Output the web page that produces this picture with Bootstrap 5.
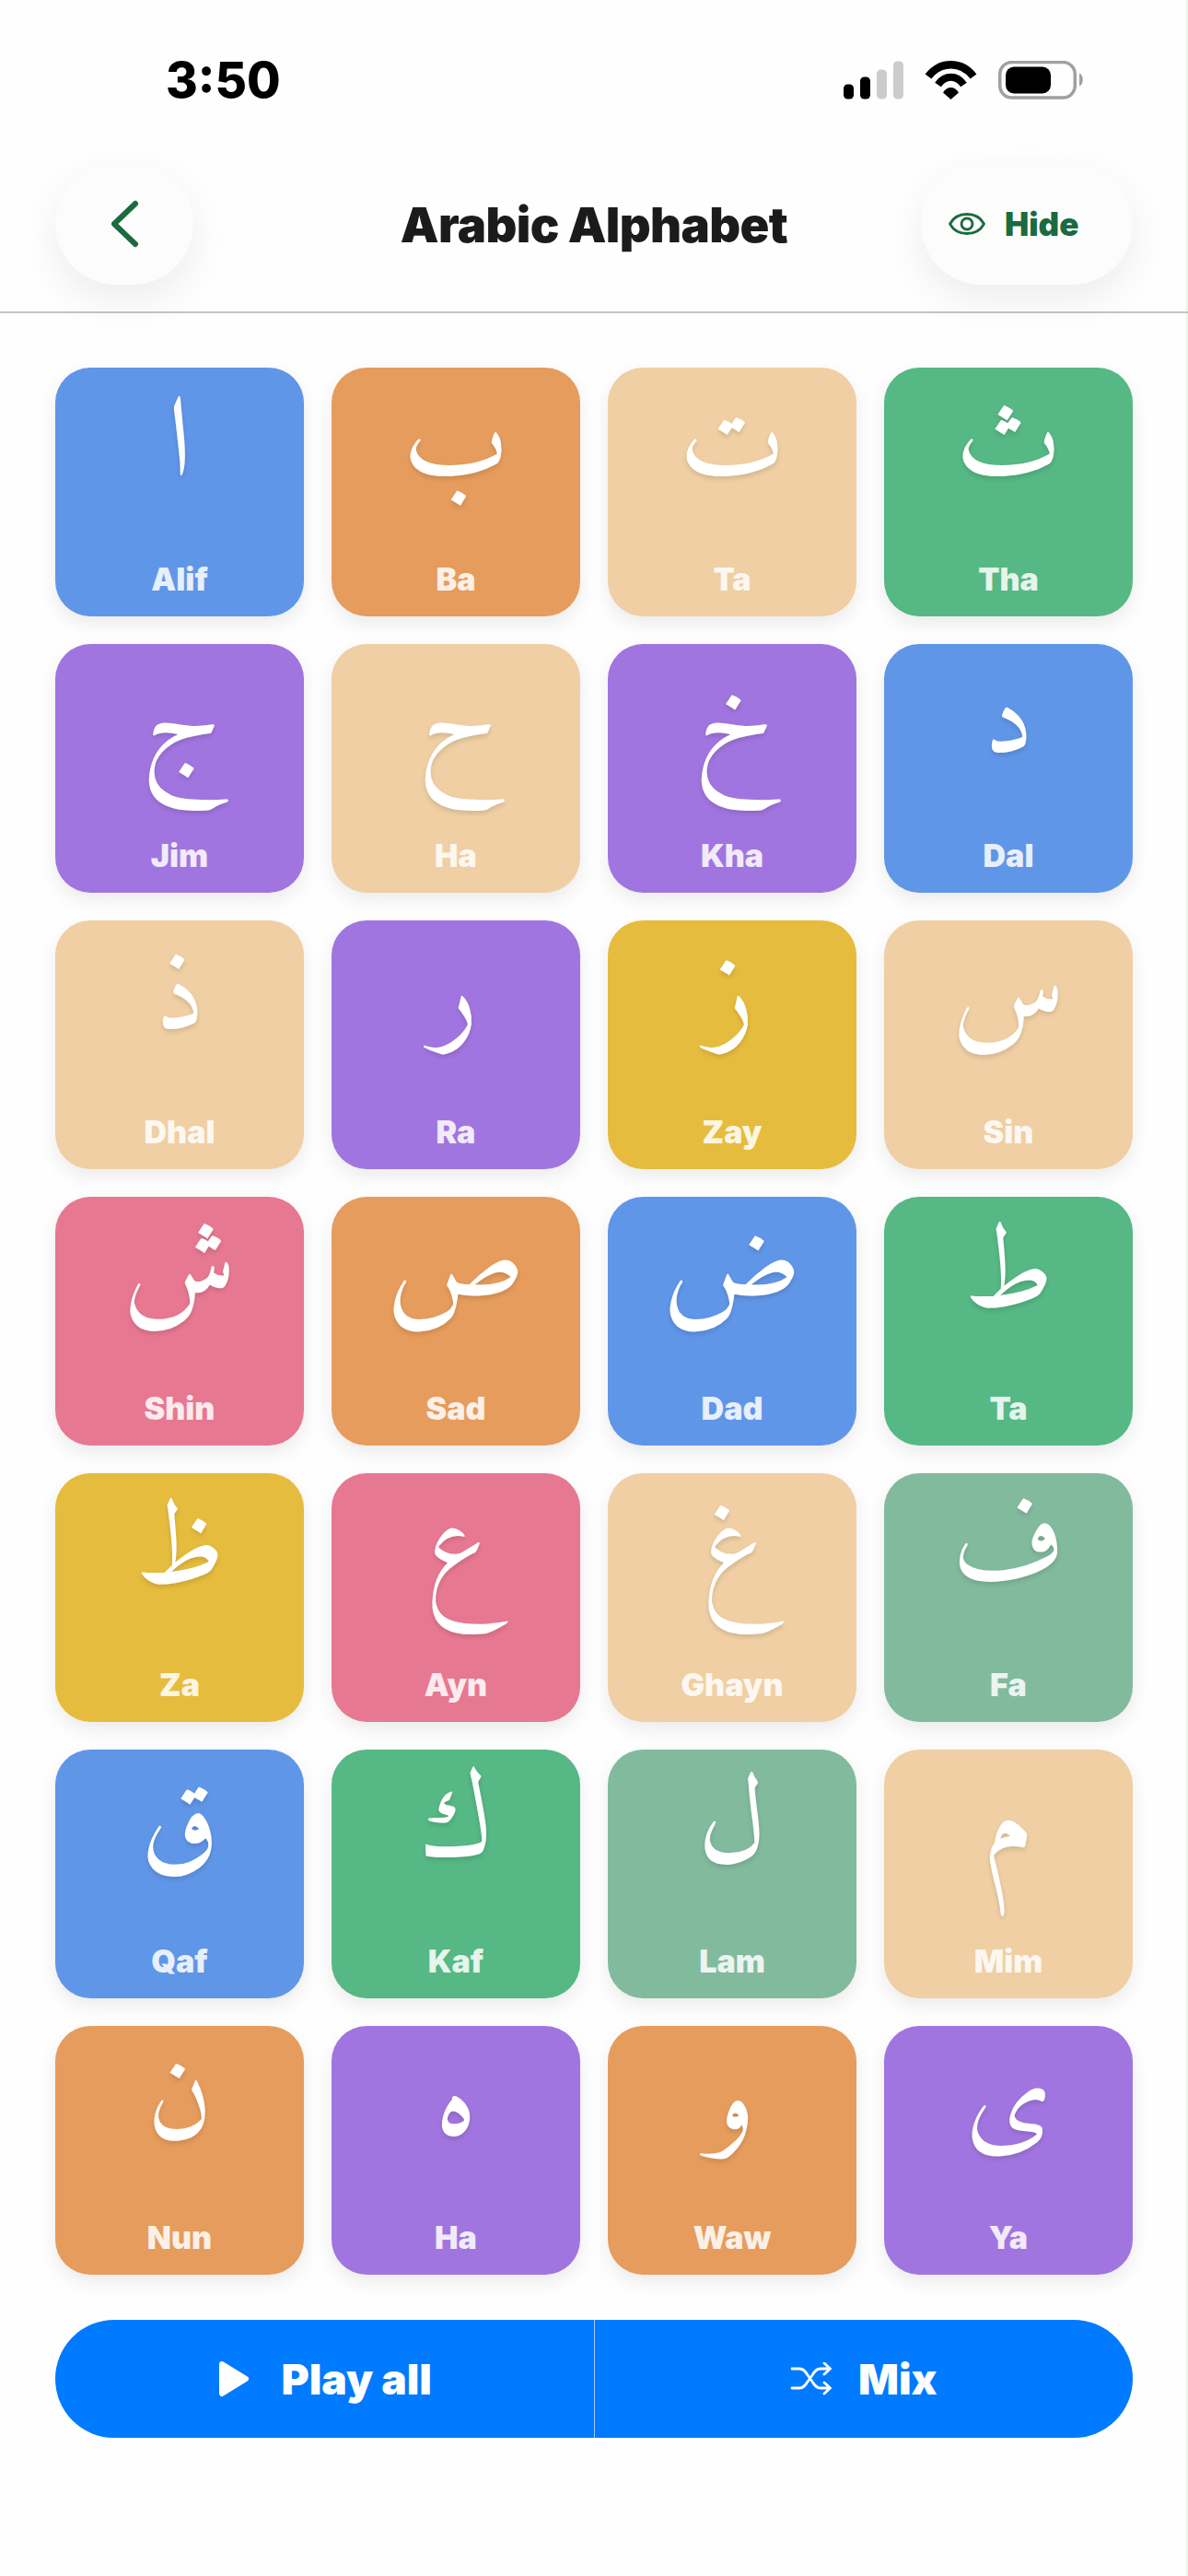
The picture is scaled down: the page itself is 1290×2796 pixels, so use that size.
<!DOCTYPE html>
<html lang="en">
<head>
<meta charset="utf-8">
<title>Arabic Alphabet</title>
<link rel="stylesheet" href="https://cdn.jsdelivr.net/npm/bootstrap@5.3.0/dist/css/bootstrap.min.css">
<style>
html,body{background:#fefefe;font-family:Inter,"Liberation Sans",sans-serif;}
.phone{width:1290px;height:2796px;overflow:hidden;background:#fefefe;box-shadow:inset -2px 0 0 #e9f8e4;}
.statusbar{height:177px;padding:0 112px 0 180px;}
.clock{font-size:53px;font-weight:800;line-height:1;color:#000;margin-top:-2px;}
.topbar{display:grid;grid-template-columns:1fr auto 1fr;align-items:center;height:163px;padding:0 60px 30px;border-bottom:2px solid #c4c4c4;}
.roundbtn{height:132px;background:#fcfcfc;border:0;border-radius:66px;box-shadow:0 16px 44px rgba(0,0,0,.07);color:#1b6b40;}
.backbtn{width:150px;}
.hidebtn{width:230px;font-size:35px;font-weight:900;padding-left:30px;gap:21px;justify-self:end;}
.pagetitle{font-size:52.500px;font-weight:900;color:#1b1b1b;letter-spacing:-.6px;margin:2px 0 0;}
.tilegrid{display:grid;grid-template-columns:repeat(4,270px);gap:30px;padding:59px 60px 0;}
.tile{height:270px;border-radius:38px;color:#fff;box-shadow:0 8px 20px rgba(0,0,0,.08);padding-bottom:21px;}
.glyph{font-family:"Amiri","DejaVu Sans",sans-serif;font-size:124px;line-height:1;height:190px;padding-top:25px;text-shadow:0 3px 5px rgba(0,0,0,.12);}
.tilename{font-size:34px;font-weight:900;line-height:38px;opacity:.85;}
.tb{background:#6096e8}.to{background:#e69c5c}.tt{background:#efcfa3}.tg{background:#56b884}
.tp{background:#a175df}.ty{background:#e6bc3e}.tk{background:#e77891}.ts{background:#82ba9e}
.actionbar{margin:49px 60px 0;height:128px;background:#007aff;border-radius:64px;overflow:hidden;}
.actbtn{flex:1 1 0;background:transparent;border:0;color:#fff;font-size:46px;font-weight:900;}
.actbtn + .actbtn{border-left:1px solid #9cc9ff;}
.playgap{gap:34px;}
.mixgap{gap:28px;}
</style>
</head>
<body>
<div class="phone d-flex flex-column">
  <div class="statusbar d-flex align-items-center justify-content-between">
    <div class="clock">3:50</div>
    <svg width="262" height="46" viewBox="0 0 262 46" aria-hidden="true">
      <rect x="0" y="25.500" width="11" height="16" rx="4.500" fill="#000"/>
      <rect x="18" y="17.500" width="11" height="24" rx="4.500" fill="#000"/>
      <rect x="36" y="9.500" width="11" height="32" rx="4.500" fill="#ccc"/>
      <rect x="54" y="0.500" width="11" height="41" rx="4.500" fill="#ccc"/>
      <path d="M92 17C105 0 128 0 141 17" fill="none" stroke="#000" stroke-width="8.500"/>
      <path d="M102.500 26C110 15 123 15 130.500 26" fill="none" stroke="#000" stroke-width="8"/>
      <path d="M108 34.500C112 27 121 27 125 34.500L116.500 42Z" fill="#000"/>
      <rect x="169.750" y="1.500" width="81.500" height="38.500" rx="13" fill="none" stroke="#a0a0a0" stroke-width="3.500"/>
      <rect x="176" y="6.500" width="49" height="29" rx="9" fill="#000"/>
      <path d="M256 13.500C261 15 261 26 256 27.500Z" fill="#a0a0a0"/>
    </svg>
  </div>
  <div class="topbar">
    <button class="roundbtn backbtn d-flex align-items-center justify-content-center" aria-label="Back">
      <svg width="34" height="54" viewBox="0 0 34 54"><path d="M29 5 6 27l23 22" fill="none" stroke="currentColor" stroke-width="6" stroke-linecap="round" stroke-linejoin="round"/></svg>
    </button>
    <h1 class="pagetitle">Arabic Alphabet</h1>
    <button class="roundbtn hidebtn d-flex align-items-center">
      <svg width="40" height="28" viewBox="0 0 40 28"><path d="M1.500 14C9 0 31 0 38.500 14 31 28 9 28 1.500 14Z" fill="none" stroke="currentColor" stroke-width="2.800" stroke-linejoin="round"/><circle cx="20" cy="14" r="6" fill="none" stroke="currentColor" stroke-width="2.800"/></svg>
      <span>Hide</span>
    </button>
  </div>
  <div class="tilegrid">
    <div class="tile tb d-flex flex-column align-items-center"><div class="glyph" lang="ar">ا</div><div class="tilename mt-auto">Alif</div></div>
    <div class="tile to d-flex flex-column align-items-center"><div class="glyph" lang="ar">ب</div><div class="tilename mt-auto">Ba</div></div>
    <div class="tile tt d-flex flex-column align-items-center"><div class="glyph" lang="ar">ت</div><div class="tilename mt-auto">Ta</div></div>
    <div class="tile tg d-flex flex-column align-items-center"><div class="glyph" lang="ar">ث</div><div class="tilename mt-auto">Tha</div></div>
    <div class="tile tp d-flex flex-column align-items-center"><div class="glyph" lang="ar">ج</div><div class="tilename mt-auto">Jim</div></div>
    <div class="tile tt d-flex flex-column align-items-center"><div class="glyph" lang="ar">ح</div><div class="tilename mt-auto">Ha</div></div>
    <div class="tile tp d-flex flex-column align-items-center"><div class="glyph" lang="ar">خ</div><div class="tilename mt-auto">Kha</div></div>
    <div class="tile tb d-flex flex-column align-items-center"><div class="glyph" lang="ar">د</div><div class="tilename mt-auto">Dal</div></div>
    <div class="tile tt d-flex flex-column align-items-center"><div class="glyph" lang="ar">ذ</div><div class="tilename mt-auto">Dhal</div></div>
    <div class="tile tp d-flex flex-column align-items-center"><div class="glyph" lang="ar">ر</div><div class="tilename mt-auto">Ra</div></div>
    <div class="tile ty d-flex flex-column align-items-center"><div class="glyph" lang="ar">ز</div><div class="tilename mt-auto">Zay</div></div>
    <div class="tile tt d-flex flex-column align-items-center"><div class="glyph" lang="ar">س</div><div class="tilename mt-auto">Sin</div></div>
    <div class="tile tk d-flex flex-column align-items-center"><div class="glyph" lang="ar">ش</div><div class="tilename mt-auto">Shin</div></div>
    <div class="tile to d-flex flex-column align-items-center"><div class="glyph" lang="ar">ص</div><div class="tilename mt-auto">Sad</div></div>
    <div class="tile tb d-flex flex-column align-items-center"><div class="glyph" lang="ar">ض</div><div class="tilename mt-auto">Dad</div></div>
    <div class="tile tg d-flex flex-column align-items-center"><div class="glyph" lang="ar">ط</div><div class="tilename mt-auto">Ta</div></div>
    <div class="tile ty d-flex flex-column align-items-center"><div class="glyph" lang="ar">ظ</div><div class="tilename mt-auto">Za</div></div>
    <div class="tile tk d-flex flex-column align-items-center"><div class="glyph" lang="ar">ع</div><div class="tilename mt-auto">Ayn</div></div>
    <div class="tile tt d-flex flex-column align-items-center"><div class="glyph" lang="ar">غ</div><div class="tilename mt-auto">Ghayn</div></div>
    <div class="tile ts d-flex flex-column align-items-center"><div class="glyph" lang="ar">ف</div><div class="tilename mt-auto">Fa</div></div>
    <div class="tile tb d-flex flex-column align-items-center"><div class="glyph" lang="ar">ق</div><div class="tilename mt-auto">Qaf</div></div>
    <div class="tile tg d-flex flex-column align-items-center"><div class="glyph" lang="ar">ك</div><div class="tilename mt-auto">Kaf</div></div>
    <div class="tile ts d-flex flex-column align-items-center"><div class="glyph" lang="ar">ل</div><div class="tilename mt-auto">Lam</div></div>
    <div class="tile tt d-flex flex-column align-items-center"><div class="glyph" lang="ar">م</div><div class="tilename mt-auto">Mim</div></div>
    <div class="tile to d-flex flex-column align-items-center"><div class="glyph" lang="ar">ن</div><div class="tilename mt-auto">Nun</div></div>
    <div class="tile tp d-flex flex-column align-items-center"><div class="glyph" lang="ar">ه</div><div class="tilename mt-auto">Ha</div></div>
    <div class="tile to d-flex flex-column align-items-center"><div class="glyph" lang="ar">و</div><div class="tilename mt-auto">Waw</div></div>
    <div class="tile tp d-flex flex-column align-items-center"><div class="glyph" lang="ar">ى</div><div class="tilename mt-auto">Ya</div></div>
  </div>
  <div class="actionbar d-flex">
    <button class="actbtn playgap d-flex align-items-center justify-content-center">
      <svg width="36" height="42" viewBox="0 0 36 42"><path d="M5 5 31 21 5 37Z" fill="#fff" stroke="#fff" stroke-width="6" stroke-linejoin="round"/></svg>
      <span>Play all</span>
    </button>
    <button class="actbtn mixgap d-flex align-items-center justify-content-center">
      <svg width="46" height="36" viewBox="0 0 46 36" fill="none" stroke="#fff" stroke-width="2.800" stroke-linecap="round" stroke-linejoin="round"><path d="M2 7h8c4 0 6 2 9 7l5 7c3 5 5 7 9 7h10M2 28h8c4 0 6-2 9-7l5-7c3-5 5-7 9-7h10M37 1l6.500 6-6.500 6M37 22l6.500 6-6.500 6"/></svg>
      <span>Mix</span>
    </button>
  </div>
</div>
</body>
</html>
